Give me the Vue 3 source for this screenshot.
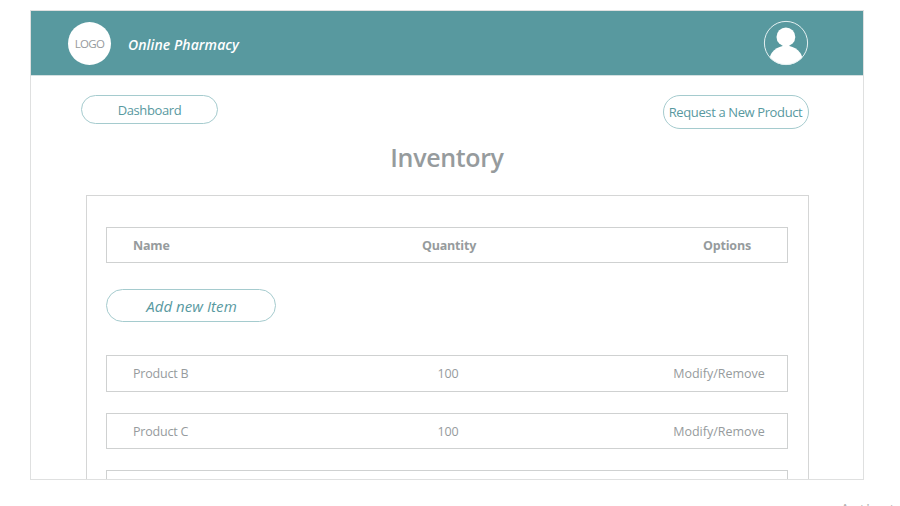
<script setup>
const products = [
  { name: 'Product B', quantity: 100 },
  { name: 'Product C', quantity: 100 },
]
</script>

<template>
  <div class="screen">
    <div class="frame">
      <header class="header">
        <div class="logo"><span>LOGO</span></div>
        <div class="brand"><span>Online Pharmacy</span></div>
        <svg class="avatar" viewBox="0 0 46 46" width="46" height="46">
          <defs>
            <clipPath id="ring"><circle cx="23" cy="23" r="22" /></clipPath>
          </defs>
          <ellipse cx="23" cy="41.2" rx="16.8" ry="15.5" fill="#fff" clip-path="url(#ring)" />
          <circle cx="22.9" cy="16.9" r="9.4" fill="#fff" />
          <circle cx="23" cy="23" r="21.6" fill="none" stroke="#e4f0f1" stroke-width="1" />
        </svg>
      </header>

      <div class="actions">
        <button class="pill dashboard"><span>Dashboard</span></button>
        <button class="pill request"><span>Request a New Product</span></button>
      </div>

      <h1 class="title"><span>Inventory</span></h1>

      <section class="panel">
        <div class="row head">
          <span class="name">Name</span>
          <span class="quantity">Quantity</span>
          <span class="options">Options</span>
        </div>
        <button class="pill add"><span>Add new Item</span></button>
        <div class="list">
          <div v-for="p in products" :key="p.name" class="row">
            <span class="name">{{ p.name }}</span>
            <span class="quantity">{{ p.quantity }}</span>
            <span class="options">Modify/Remove</span>
          </div>
          <div class="row"></div>
        </div>
      </section>
    </div>
    <div class="notice">Activat</div>
  </div>
</template>

<style>
body {
  background: #fff;
}
</style>

<style scoped>
.screen {
  box-sizing: border-box;
  width: 900px;
  height: 506px;
  padding: 10px 0 0 30px;
  overflow: hidden;
  font-family: "Open Sans", "Noto Sans", sans-serif;
  color: #969b9d;
}
.screen * {
  box-sizing: border-box;
}
.frame {
  width: 834px;
  height: 470px;
  border: 1px solid #dfe0e0;
  overflow: hidden;
}
.header {
  display: flex;
  align-items: center;
  height: 65px;
  padding: 0 54px 0 37px;
  background: #58999f;
  border-bottom: 1px solid #d3e0e1;
}
.logo {
  display: flex;
  align-items: center;
  justify-content: center;
  width: 43px;
  height: 43px;
  border-radius: 50%;
  background: #fff;
  font-size: 11.5px;
  letter-spacing: -0.7px;
}
.brand {
  flex: 1;
  padding: 2px 0 0 17px;
  color: #fff;
  font-size: 14px;
  letter-spacing: 0.08px;
  font-style: italic;
  font-weight: 600;
  white-space: nowrap;
}
.avatar {
  flex: none;
}
.actions {
  display: flex;
  justify-content: space-between;
  align-items: flex-start;
  height: 53px;
  padding: 19px 54px 0 50px;
}
.pill {
  display: flex;
  align-items: center;
  justify-content: center;
  margin: 0;
  padding: 0;
  border: 1px solid #a5cbce;
  border-radius: 18px;
  background: #fff;
  color: #58999f;
  font-family: inherit;
  font-size: 13px;
  letter-spacing: -0.38px;
  white-space: nowrap;
}
.dashboard {
  width: 137px;
  height: 29px;
}
.request {
  width: 146px;
  height: 34px;
  padding-right: 1px;
}
.title {
  height: 56px;
  margin: 0;
  font-size: 25px;
  line-height: 57px;
  letter-spacing: -0.35px;
  font-weight: 600;
  text-align: center;
}
.panel {
  width: 723px;
  height: 400px;
  margin: 10px 0 0 55px;
  padding: 31px 20px 0 19px;
  border: 1px solid #d5d6d6;
}
.row {
  display: grid;
  grid-template-columns: 281px 120px 1fr;
  align-items: center;
  width: 682px;
  height: 36.5px;
  padding-top: 1px;
  border: 1px solid #cfd1d1;
  font-size: 12.5px;
}
.name {
  padding-left: 26px;
  letter-spacing: -0.2px;
}
.quantity {
  text-align: center;
  letter-spacing: -0.2px;
}
.options {
  width: 136px;
  justify-self: end;
  text-align: center;
}
.head {
  height: 36px;
  font-weight: 700;
}
.head .quantity {
  padding-left: 2px;
}
.head .options {
  width: 120px;
  letter-spacing: -0.2px;
}
.add {
  width: 170px;
  height: 33px;
  margin-top: 26px;
  font-size: 15px;
  letter-spacing: 0.05px;
  font-style: italic;
}
.add span {
  padding-left: 1px;
}
.list {
  display: grid;
  gap: 21px;
  margin-top: 33px;
}
.notice {
  height: 26px;
  padding: 20px 0 0 810px;
  overflow: hidden;
  font-size: 16px;
  line-height: 20px;
  letter-spacing: 0.8px;
  color: #b4b4b4;
  white-space: nowrap;
}
</style>
